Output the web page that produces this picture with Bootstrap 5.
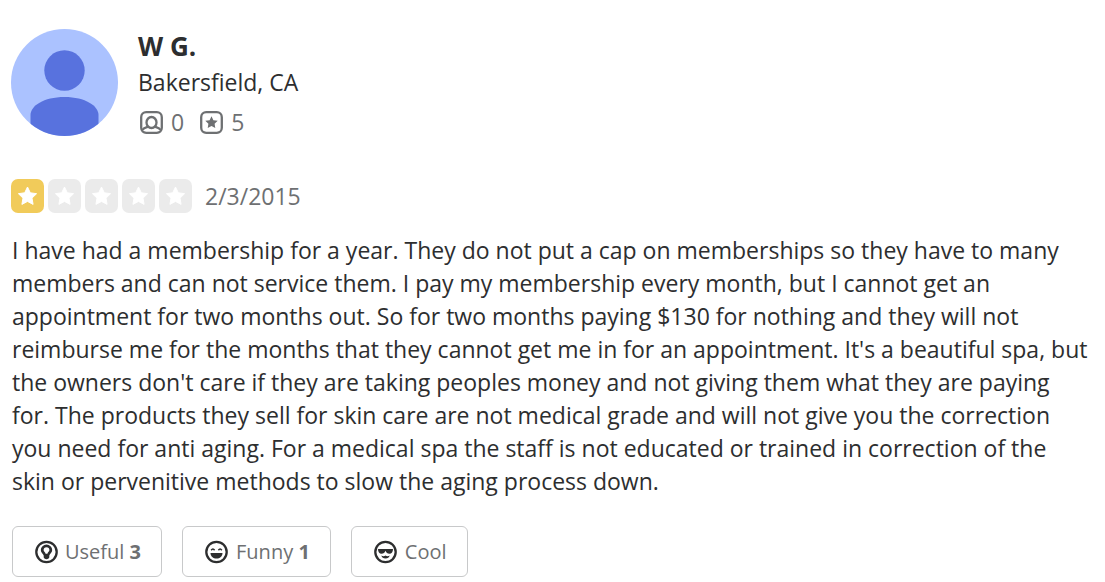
<!DOCTYPE html>
<html lang="en">
<head>
<meta charset="utf-8">
<meta name="viewport" content="width=device-width, initial-scale=1">
<title>Review by W G.</title>
<link href="https://cdn.jsdelivr.net/npm/bootstrap@5.3.0/dist/css/bootstrap.min.css" rel="stylesheet">
<style>
  body { font-family: "Open Sans", "Noto Sans", sans-serif; color: #2d2e2f; background: #fff; font-size: 23px; line-height: 33px; }
  .review { padding: 29px 16px 4px 11px; }
  .profile { gap: 20px; margin-bottom: 39px; }
  .avatar { width: 107px; height: 107px; }
  .reviewer { font-size: 26px; line-height: 34px; }
  .place { line-height: 38px; }
  .muted-text { color: #6e7072; }
  .counts { gap: 14px; line-height: 36px; margin-top: 3px; font-weight: 500; }
  .count { gap: 6px; }
  .rating { gap: 13px; margin-bottom: 21px; line-height: 34px; }
  .stars { gap: 4px; }
  .star { width: 33px; height: 34px; color: #ebebeb; }
  .star.filled { color: #f1cb5a; }
  .review-text { margin: 0 0 28px 1px; }
  .votes { gap: 20px; margin-left: 1px; }
  .vote { --bs-btn-padding-x: 20px; --bs-btn-padding-y: 8px; --bs-btn-font-size: 20px; --bs-btn-line-height: 33px;
    --bs-btn-color: #6e7072; --bs-btn-border-color: #c8c9ca; --bs-btn-border-radius: 6px;
    --bs-btn-hover-color: #6e7072; --bs-btn-hover-bg: #f5f5f5; --bs-btn-hover-border-color: #c8c9ca; gap: 6px; }
  .vote svg { color: #2d2e2f; }
</style>
</head>
<body>
<svg class="d-none" aria-hidden="true">
  <symbol id="star-tile" viewBox="0 0 33 34">
    <rect width="33" height="34" rx="7" fill="currentColor"/>
    <path d="M16.500 8l2.800 5.800 6.300.900-4.600 4.400 1.100 6.300-5.600-3-5.600 3 1.100-6.300-4.600-4.400 6.300-.900z" fill="#fff" stroke="#fff" stroke-linejoin="round"/>
  </symbol>
</svg>
<main class="review container-fluid">
  <header class="profile d-flex align-items-start">
    <svg class="avatar rounded-circle flex-shrink-0" viewBox="0 0 107 107" role="img" aria-label="W G.">
      <rect width="107" height="107" fill="#abc2ff"/>
      <circle cx="53.500" cy="41.500" r="20.200" fill="#5872de"/>
      <path d="M19.500 107V86c0-9 13-18 34-18s34 9 34 18v21z" fill="#5872de"/>
    </svg>
    <div>
      <h1 class="reviewer fw-bold mb-0">W G.</h1>
      <div class="place">Bakersfield, CA</div>
      <div class="counts muted-text d-flex">
        <span class="count d-flex align-items-center">
          <svg width="27" height="24" viewBox="0 0 27 24" fill="none" stroke="currentColor" stroke-width="2.300" role="img" aria-label="Friends">
            <rect x="3.200" y="2.200" width="20.600" height="20.600" rx="5"/>
            <ellipse cx="13.500" cy="12.500" rx="5" ry="5.500"/>
            <path d="M4.500 20c1-2.200 3.500-2.400 6-3.300M22.500 20c-1-2.200-3.500-2.400-6-3.300"/>
          </svg><span>0</span></span>
        <span class="count d-flex align-items-center">
          <svg width="27" height="24" viewBox="0 0 27 24" role="img" aria-label="Reviews">
            <rect x="3.200" y="2.200" width="20.600" height="20.600" rx="5" fill="none" stroke="currentColor" stroke-width="2.300"/>
            <path d="M13.500 6.300l1.900 3.900 4.300.600-3.100 3 .700 4.300-3.800-2-3.800 2 .700-4.300-3.100-3 4.300-.600z" fill="currentColor"/>
          </svg><span>5</span></span>
      </div>
    </div>
  </header>
  <div class="rating d-flex">
    <div class="stars d-flex" role="img" aria-label="1 star rating">
      <svg class="star filled"><use href="#star-tile"/></svg>
      <svg class="star"><use href="#star-tile"/></svg>
      <svg class="star"><use href="#star-tile"/></svg>
      <svg class="star"><use href="#star-tile"/></svg>
      <svg class="star"><use href="#star-tile"/></svg>
    </div>
    <time class="muted-text" datetime="2015-02-03">2/3/2015</time>
  </div>
  <p class="review-text">I have had a membership for a year. They do not put a cap on memberships so they have to many members and can not service them. I pay my membership every month, but I cannot get an appointment for two months out. So for two months paying $130 for nothing and they will not reimburse me for the months that they cannot get me in for an appointment. It's a beautiful spa, but the owners don't care if they are taking peoples money and not giving them what they are paying for. The products they sell for skin care are not medical grade and will not give you the correction you need for anti aging. For a medical spa the staff is not educated or trained in correction of the skin or pervenitive methods to slow the aging process down.</p>
  <div class="votes d-flex">
    <button type="button" class="vote btn d-flex align-items-center">
      <svg width="26" height="24" viewBox="0 0 26 24" aria-hidden="true">
        <circle cx="13.500" cy="12" r="10.200" fill="none" stroke="currentColor" stroke-width="2.300"/>
        <path d="M13.500 4.500a5.700 5.600 0 0 0-5.700 5.600c0 2.500 2.300 3.900 2.900 5.400v1.500c0 1.300 1.300 2.200 2.800 2.200s2.800-.900 2.800-2.200v-1.500c.600-1.500 2.900-2.900 2.900-5.400a5.700 5.600 0 0 0-5.700-5.600z" fill="currentColor"/>
        <path d="M13.500 7.200a2.900 2.900 0 0 0-2.900 2.900c0 1.500 1.500 2 2 3.600h1.800c.500-1.600 2-2.100 2-3.600a2.900 2.900 0 0 0-2.900-2.900z" fill="#fff"/>
      </svg>
      <span>Useful <strong>3</strong></span>
    </button>
    <button type="button" class="vote btn d-flex align-items-center">
      <svg width="27" height="24" viewBox="0 0 27 24" aria-hidden="true">
        <circle cx="13.500" cy="12" r="10.200" fill="none" stroke="currentColor" stroke-width="2.300"/>
        <path d="M8.200 10.300q1.700-2.400 3.400 0M15.400 10.300q1.700-2.400 3.400 0" fill="none" stroke="currentColor" stroke-width="1.500"/>
        <path d="M7.500 13h12c0 3.500-2.700 5.500-6 5.500s-6-2-6-5.500z" fill="currentColor"/>
      </svg>
      <span>Funny <strong>1</strong></span>
    </button>
    <button type="button" class="vote btn d-flex align-items-center">
      <svg width="27" height="24" viewBox="0 0 27 24" aria-hidden="true">
        <circle cx="13.500" cy="12" r="10.200" fill="none" stroke="currentColor" stroke-width="2.300"/>
        <path d="M6 9h15c0 3-1.400 4.700-3.500 4.700-2 0-3.300-1.300-4-3-.700 1.700-2 3-4 3C7.400 13.700 6 12 6 9z" fill="currentColor"/>
        <path d="M9.300 15.500q2.200 1.300 4.200 0 2 1.300 4.200 0-.800 3-4.200 3t-4.200-3z" fill="currentColor"/>
      </svg>
      <span>Cool</span>
    </button>
  </div>
</main>
<script src="https://cdn.jsdelivr.net/npm/bootstrap@5.3.0/dist/js/bootstrap.bundle.min.js"></script>
</body>
</html>
